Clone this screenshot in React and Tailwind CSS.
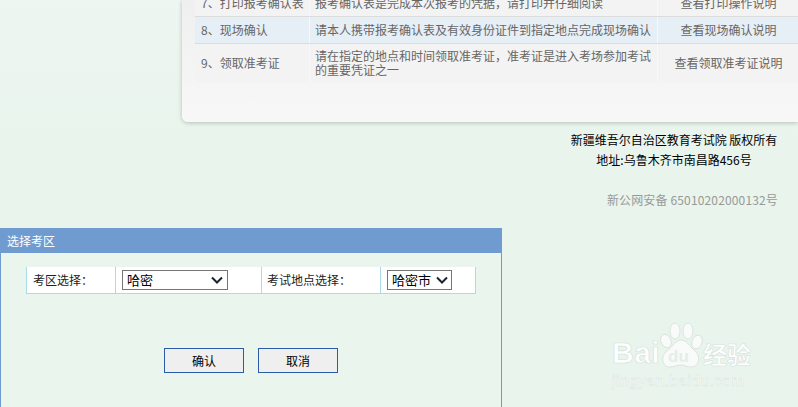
const font = { fontFamily: '"Noto Sans CJK SC", "Liberation Sans", sans-serif' }

const steps = [
  {
    name: "7、打印报考确认表",
    desc: ["报考确认表是完成本次报考的凭据，请打印并仔细阅读"],
    link: "查看打印操作说明",
    h: "h-[27px]",
    bg: "bg-[#f3f3f3]",
  },
  {
    name: "8、现场确认",
    desc: ["请本人携带报考确认表及有效身份证件到指定地点完成现场确认"],
    link: "查看现场确认说明",
    h: "h-[27px]",
    bg: "bg-[#e6eef6]",
  },
  {
    name: "9、领取准考证",
    desc: ["请在指定的地点和时间领取准考证，准考证是进入考场参加考试", "的重要凭证之一"],
    link: "查看领取准考证说明",
    h: "h-[38px]",
    bg: "bg-[#f3f3f3]",
  },
]

function StepRow({ step }) {
  return (
    <div className={`flex ${step.h} ${step.bg} border-b border-[#dcdcdc] last:border-b-0 text-[12px] text-[#666]`}>
      <div className="flex w-[115px] items-center whitespace-nowrap border-r border-[#f8f8f8] pl-[6px]">{step.name}</div>
      <div className="flex w-[348px] flex-col justify-center whitespace-nowrap border-r border-[#f8f8f8] pl-[5px] leading-[14px]">
        {step.desc.map((line) => (
          <span key={line}>{line}</span>
        ))}
      </div>
      <div className="flex w-[141px] items-center justify-center whitespace-nowrap">{step.link}</div>
    </div>
  )
}

function Chevron() {
  return (
    <svg width="12" height="8" viewBox="0 0 12 8" fill="none" className="shrink-0">
      <path d="M1 1.5 L6 6.5 L11 1.5" stroke="#1b2330" strokeWidth="2" />
    </svg>
  )
}

function Dialog() {
  return (
    <div className="absolute left-0 top-[228px] h-[190px] w-[502px] border-x border-[#6f9bd1] bg-[#e9f5ed]">
      <div className="flex h-[25px] items-center bg-[#6f9bd1] pl-[6px] text-[12px] text-white">选择考区</div>
      <div className="ml-[25px] mt-[14px] flex h-[27px] w-[450px] border-x border-b border-[#a9dbe8] bg-white text-[12px] text-[#222]">
        <div className="flex w-[89px] items-center border-r border-[#a9dbe8] pl-[6px]">考区选择：</div>
        <div className="flex w-[146px] items-center border-r border-[#a9dbe8] pl-[6px]">
          <div className="flex h-[20px] w-[106px] items-center justify-between border border-[#767676] pl-[4px] pr-[4px] text-[13px] text-black">
            哈密
            <Chevron />
          </div>
        </div>
        <div className="flex w-[119px] items-center border-r border-[#a9dbe8] pl-[5px]">考试地点选择：</div>
        <div className="flex flex-1 items-center pl-[6px]">
          <div className="flex h-[20px] w-[65px] items-center justify-between border border-[#767676] pl-[4px] pr-[3px] text-[13px] text-black">
            哈密市
            <Chevron />
          </div>
        </div>
      </div>
      <div className="ml-[163px] mt-[54px] flex gap-[14px]">
        <button className="h-[25px] w-[80px] border border-[#2a5ca8] bg-[#efefef] text-[12px] text-black">确认</button>
        <button className="h-[25px] w-[80px] border border-[#2a5ca8] bg-[#efefef] text-[12px] text-black">取消</button>
      </div>
    </div>
  )
}

function Watermark() {
  return (
    <div className="pointer-events-none absolute left-[612px] top-[320px] h-[80px] w-[170px] text-white">
      <svg width="44" height="48" viewBox="0 0 44 48" className="absolute left-[47px] top-[1px]" fill="#f8fbfa" stroke="#d3dfd9" strokeWidth="0.8">
        <ellipse cx="7" cy="20" rx="5" ry="7" transform="rotate(-25 7 20)" />
        <ellipse cx="16" cy="10" rx="5" ry="8" />
        <ellipse cx="29" cy="10" rx="5" ry="8" />
        <ellipse cx="38" cy="21" rx="5" ry="7" transform="rotate(20 38 21)" />
        <path d="M22 19 C28 19 30 25 35 29 C42 34 41 46 32 46 C28 46 26 44 22 44 C18 44 15 46 11 46 C3 46 1 35 8 30 C14 26 16 19 22 19 Z" />
      </svg>
      <span className="absolute left-0 top-[16px] text-[30px] font-bold leading-[34px] tracking-[0.5px] [font-family:'Liberation_Sans',sans-serif] [-webkit-text-stroke:0.6px_#d3dfd9]">Bai</span>
      <span className="absolute left-[56px] top-[28px] text-[17px] font-bold leading-[18px] text-[#e4eee9] [font-family:'Liberation_Sans',sans-serif]">du</span>
      <span className="absolute left-[91px] top-[19px] text-[24px] font-bold leading-[30px] [-webkit-text-stroke:0.5px_#d3dfd9]" style={font}>经验</span>
      <span className="absolute left-0 top-[51px] whitespace-nowrap text-[15px] leading-[20px] tracking-[0.7px] [font-family:'Liberation_Sans',sans-serif] [-webkit-text-stroke:0.4px_#d3dfd9]">jingyan.baidu.com</span>
    </div>
  )
}

export default function App() {
  return (
    <div className="relative h-[407px] w-[798px] overflow-hidden bg-gradient-to-b from-[#eef5f2] to-[#e8f4ec] to-[40%]" style={font}>
      <div className="ml-[182px] h-[122px] overflow-hidden rounded-bl-[6px] bg-gradient-to-b from-[#efefef] to-[#f8f8f8] pl-[13px] shadow-[0_1px_4px_rgba(0,0,0,0.22)]">
        <div className="-mt-[10px] w-[610px]">
          {steps.map((step) => (
            <StepRow key={step.name} step={step} />
          ))}
        </div>
      </div>

      <div className="ml-auto mr-[20px] mt-[8px] w-[208px] text-center text-[12px] leading-[20px] text-black">
        <p className="whitespace-nowrap">新疆维吾尔自治区教育考试院 版权所有</p>
        <p className="whitespace-nowrap">地址:乌鲁木齐市南昌路456号</p>
        <p className="mt-[20px] whitespace-nowrap text-right tracking-[0.15px] text-[#999]">新公网安备 65010202000132号</p>
      </div>

      <Dialog />
      <Watermark />
    </div>
  )
}
